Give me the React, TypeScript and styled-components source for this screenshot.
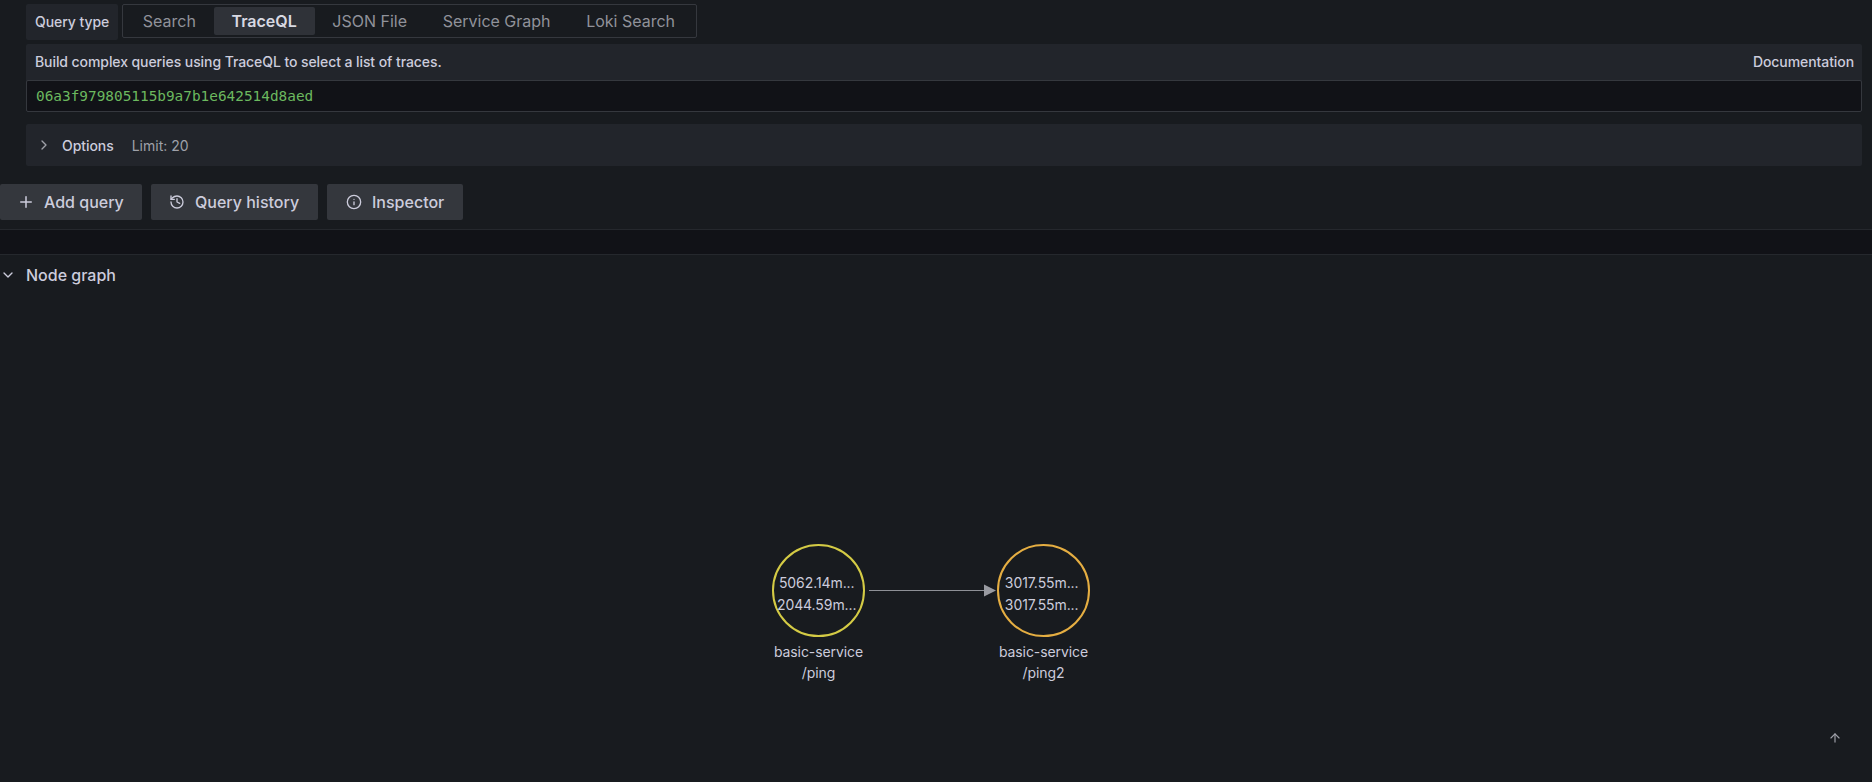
import React from "react";
import styled, { createGlobalStyle } from "styled-components";
import { ChevronDown, ChevronRight, Plus, History, Info, ArrowUp } from "lucide-react";

const Global = createGlobalStyle`
  html, body { margin: 0; padding: 0; background: #181b1f; height: 100%; overflow: hidden; }
  body { font-family: Inter, "Noto Sans", sans-serif; color: #ccccdc; }
`;

const Page = styled.div`
  width: 1872px;
  height: 782px;
  display: flex;
  flex-direction: column;
  position: relative;
  overflow: hidden;
`;

const QueryArea = styled.section`
  display: flex;
  flex-direction: column;
  padding: 4px 10px 0 26px;
`;

const TypeRow = styled.div`
  display: flex;
  gap: 4px;
  height: 36px;
`;

const TypeLabel = styled.label`
  width: 92px;
  box-sizing: border-box;
  padding: 0 0 2px 9px;
  display: flex;
  align-items: center;
  background: #22252b;
  border-radius: 2px;
  font-size: 14px;
  font-weight: 500;
  letter-spacing: -0.06px;
  color: #ccccdc;
`;

const Tabs = styled.div`
  display: flex;
  width: 575px;
  height: 34px;
  box-sizing: border-box;
  padding: 2px;
  border: 1px solid #35383e;
  border-radius: 2px;
`;

const Tab = styled.div<{ $active?: boolean }>`
  display: flex;
  align-items: center;
  justify-content: center;
  height: 28px;
  padding: 0 17.8px;
  white-space: nowrap;
  border-radius: 2px;
  font-size: 16px;
  font-weight: ${(p) => (p.$active ? 600 : 400)};
  color: ${(p) => (p.$active ? "#d8d9e2" : "#90929a")};
  background: ${(p) => (p.$active ? "#2f3238" : "transparent")};
`;

const EditorCard = styled.div`
  margin-top: 4px;
  background: #22252b;
  border-radius: 2px;
  display: flex;
  flex-direction: column;
`;

const EditorHead = styled.div`
  height: 36px;
  box-sizing: border-box;
  display: flex;
  align-items: center;
  justify-content: space-between;
  padding: 0 8px 1px 9px;
  font-size: 14px;
  font-weight: 500;
  letter-spacing: -0.08px;
  color: #ccccdc;
`;

const CodeInput = styled.div`
  height: 32px;
  box-sizing: border-box;
  display: flex;
  align-items: center;
  padding-left: 9px;
  background: #111217;
  border: 1px solid #35383e;
  border-radius: 2px;
  font-family: "DejaVu Sans Mono", monospace;
  font-size: 14.4px;
  color: #6cb85f;
`;

const OptionsBar = styled.div`
  margin-top: 12px;
  height: 42px;
  display: flex;
  align-items: center;
  background: #22252b;
  border-radius: 2px;
  padding-left: 10px;
  font-size: 14px;
`;

const OptionsIcon = styled.span`
  display: flex;
  width: 16px;
  color: #9fa1a9;
`;

const OptionsName = styled.span`
  margin-left: 10px;
  font-weight: 500;
  letter-spacing: -0.06px;
  color: #ccccdc;
`;

const OptionsHint = styled.span`
  margin-left: 18px;
  color: #9fa1a9;
`;

const ButtonRow = styled.div`
  display: flex;
  gap: 9px;
  margin-top: 18px;
`;

const ToolButton = styled.button<{ $w: number; $pad: number; $gap: number }>`
  display: flex;
  align-items: center;
  gap: ${(p) => p.$gap}px;
  width: ${(p) => p.$w}px;
  height: 36px;
  box-sizing: border-box;
  padding: 0 0 0 ${(p) => p.$pad}px;
  background: #34373d;
  border: 0;
  border-radius: 2px;
  font-family: inherit;
  font-size: 16px;
  font-weight: 500;
  color: #ccccdc;
`;

const Divider = styled.div`
  margin-top: 9px;
  height: 26px;
  box-sizing: border-box;
  background: #111217;
  border-top: 1px solid #25282d;
  border-bottom: 1px solid #25282d;
`;

const GraphHead = styled.div`
  height: 40px;
  display: flex;
  align-items: center;
  font-size: 16px;
  font-weight: 500;
  color: #ccccdc;
`;

const HeadIcon = styled.span`
  display: flex;
  width: 26px;
  color: #ccccdc;
`;

const Canvas = styled.div`
  flex: 1;
  position: relative;
`;

const GraphSvg = styled.svg`
  position: absolute;
  left: 0;
  top: 0;
`;

const NodeText = styled.text`
  font-family: Inter, sans-serif;
  font-size: 14px;
  letter-spacing: -0.08px;
  fill: #ccccdc;
  text-anchor: middle;
`;

const ScrollUp = styled.span`
  position: absolute;
  right: 30px;
  bottom: 37px;
  display: flex;
  color: #9fa1a9;
`;

const Node = ({ cx, color, a, b, name, op }: { cx: number; color: string; a: string; b: string; name: string; op: string }) => (
  <g>
    <circle cx={cx} cy={295.5} r={45.5} fill="none" stroke={color} strokeWidth={2} />
    <NodeText x={cx - 1.8} y={293}>{a}</NodeText>
    <NodeText x={cx - 1.8} y={315}>{b}</NodeText>
    <NodeText x={cx} y={362}>{name}</NodeText>
    <NodeText x={cx} y={383}>{op}</NodeText>
  </g>
);

export default function App() {
  return (
    <Page>
      <Global />
      <QueryArea>
        <TypeRow>
          <TypeLabel>Query type</TypeLabel>
          <Tabs>
            <Tab>Search</Tab>
            <Tab $active>TraceQL</Tab>
            <Tab>JSON File</Tab>
            <Tab>Service Graph</Tab>
            <Tab>Loki Search</Tab>
          </Tabs>
        </TypeRow>
        <EditorCard>
          <EditorHead>
            <span>Build complex queries using TraceQL to select a list of traces.</span>
            <span>Documentation</span>
          </EditorHead>
          <CodeInput>06a3f979805115b9a7b1e642514d8aed</CodeInput>
        </EditorCard>
        <OptionsBar>
          <OptionsIcon><ChevronRight size={16} /></OptionsIcon>
          <OptionsName>Options</OptionsName>
          <OptionsHint>Limit: 20</OptionsHint>
        </OptionsBar>
      </QueryArea>
      <ButtonRow>
        <ToolButton $w={142} $pad={17} $gap={9}><Plus size={18} />Add query</ToolButton>
        <ToolButton $w={167} $pad={18} $gap={10}><History size={16} />Query history</ToolButton>
        <ToolButton $w={136} $pad={19} $gap={10}><Info size={16} />Inspector</ToolButton>
      </ButtonRow>
      <Divider />
      <GraphHead>
        <HeadIcon><ChevronDown size={16} /></HeadIcon>
        Node graph
      </GraphHead>
      <Canvas>
        <GraphSvg width={1872} height={487} viewBox="0 0 1872 487">
          <Node cx={818.5} color="#d4cb45" a="5062.14m..." b="2044.59m..." name="basic-service" op="/ping" />
          <Node cx={1043.5} color="#e5ae42" a="3017.55m..." b="3017.55m..." name="basic-service" op="/ping2" />
          <line x1={869} y1={295.5} x2={985} y2={295.5} stroke="#8e9096" strokeWidth={1} />
          <polygon points="984,289.5 996,295.5 984,301.5" fill="#999ba1" />
        </GraphSvg>
        <ScrollUp><ArrowUp size={14} /></ScrollUp>
      </Canvas>
    </Page>
  );
}
